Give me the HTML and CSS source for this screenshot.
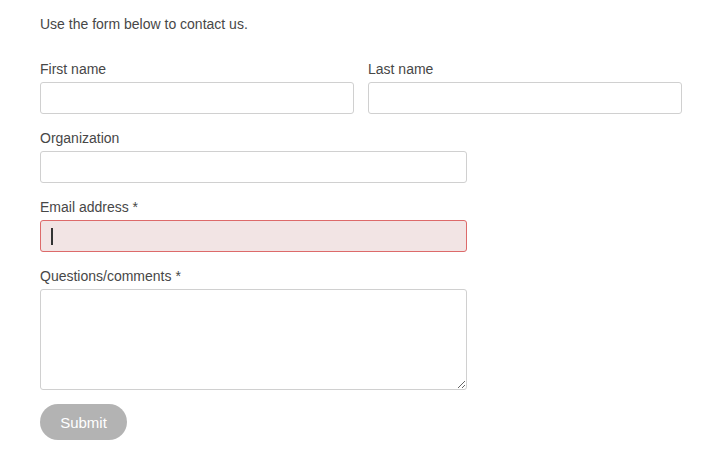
FILE: index.html
```html
<!DOCTYPE html>
<html>
<head>
    <link rel="stylesheet" href="styles.css">
</head>
<body>
    <form class="contact-form">
        <p class="intro">Use the form below to contact us.</p>

        <div class="row">
            <div class="field">
                <label for="first">First name</label>
                <input type="text" id="first">
            </div>
            <div class="field">
                <label for="last">Last name</label>
                <input type="text" id="last">
            </div>
        </div>

        <div class="field half">
            <label for="org">Organization</label>
            <input type="text" id="org">
        </div>

        <div class="field half">
            <label for="email">Email address *</label>
            <div class="input-wrap">
                <input type="email" id="email" class="invalid">
                <span class="caret"></span>
            </div>
        </div>

        <div class="field half">
            <label for="comments">Questions/comments *</label>
            <textarea id="comments"></textarea>
        </div>

        <button type="submit" class="submit" disabled>Submit</button>
    </form>
</body>
</html>
```

FILE: styles.css
```css
body {
    margin: 0;
    background: #fff;
    font-family: 'Liberation Sans', Arial, sans-serif;
    font-size: 14px;
    color: #474747;
}

.contact-form {
    width: 642px;
    padding: 14px 0 0 40px;
}

.intro {
    margin: 0 0 25px;
    line-height: 20px;
}

.row {
    display: flex;
    gap: 14px;
}

.row .field {
    flex: 1;
}

.field {
    margin-bottom: 14px;
}

.field.half {
    width: 427px;
}

label {
    display: block;
    line-height: 20px;
    margin-bottom: 3px;
}

input,
textarea {
    display: block;
    box-sizing: border-box;
    width: 100%;
    height: 32px;
    margin: 0;
    padding: 6px 10px;
    border: 1px solid #d0d0d0;
    border-radius: 3px;
    background: #fff;
    font: inherit;
    color: #333;
    outline: none;
}

textarea {
    height: 101px;
    resize: vertical;
}

.input-wrap {
    position: relative;
}

input.invalid {
    background: #f2e4e4;
    border-color: #dd6a6a;
}

.caret {
    position: absolute;
    left: 11px;
    top: 8px;
    width: 2px;
    height: 17px;
    background: #333;
}

.submit {
    display: block;
    width: 87px;
    height: 36px;
    margin-top: 3px;
    border: none;
    border-radius: 18px;
    background: #b3b3b3;
    color: #fff;
    font-family: inherit;
    font-size: 15px;
}
```
